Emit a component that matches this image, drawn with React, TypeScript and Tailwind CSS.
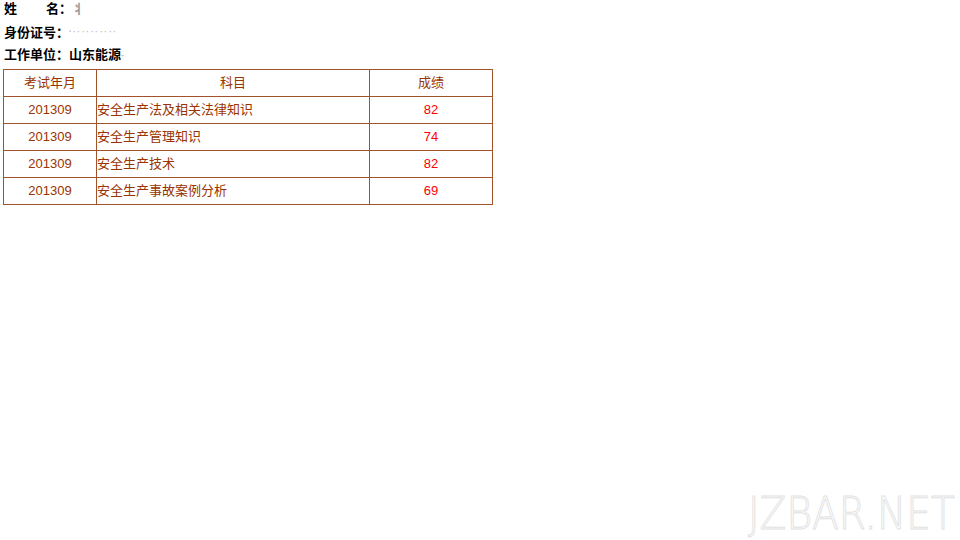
import React from "react";

const rows = [
  { m: "201309", s: "安全生产法及相关法律知识", v: "82" },
  { m: "201309", s: "安全生产管理知识", v: "74" },
  { m: "201309", s: "安全生产技术", v: "82" },
  { m: "201309", s: "安全生产事故案例分析", v: "69" },
];

export default function App() {
  return (
    <div className="relative w-[960px] h-[540px] bg-white overflow-hidden" style={{ fontFamily: '"Liberation Sans", Arial, "Noto Sans CJK SC", sans-serif' }}>
      <div className="pl-[4px] pt-[0px] text-[13px] font-bold text-black leading-[24px]">
        <div className="h-[18px] leading-[18px] flex">
          <span className="w-[42px] inline-block">姓</span>
          <span>名：</span>
          <span className="text-[#999]">丬</span>
        </div>
        <div className="h-[24px] leading-[30px] flex">
          <span>身份证号：</span>
          <span className="text-[#bbb] text-[8px] tracking-[1px]">‘‥‥‥‥‥</span>
        </div>
        <div className="h-[24px] leading-[26px] flex">
          <span>工作单位：</span>
          <span>山东能源</span>
          <span className="text-[#ccc] text-[10px]">-</span>
        </div>
      </div>
      <table className="ml-[3px] mt-[3px] w-[490px] border-collapse text-[13px] text-[#993300]">
        <tbody>
          <tr className="h-[27px]">
            <td className="border border-[#a0522d] w-[93px] text-center">考试年月</td>
            <td className="border border-[#a0522d] w-[273px] text-center">科目</td>
            <td className="border border-[#a0522d] text-center">成绩</td>
          </tr>
          {rows.map((r, i) => (
            <tr key={i} className="h-[27px]">
              <td className="border border-[#a0522d] text-center">{r.m}</td>
              <td className="border border-[#a0522d] text-left">{r.s}</td>
              <td className="border border-[#a0522d] text-center text-[#ff0000]">{r.v}</td>
            </tr>
          ))}
        </tbody>
      </table>
      <div className="absolute left-[748px] top-[488px] text-[44px] leading-[52px] whitespace-nowrap text-white origin-left [transform:scaleX(0.89)] [-webkit-text-stroke:1px_#e2e2e2]" style={{ fontFamily: '"DejaVu Sans", sans-serif', fontWeight: 200 }}>
        JZBAR.NET
      </div>
    </div>
  );
}
